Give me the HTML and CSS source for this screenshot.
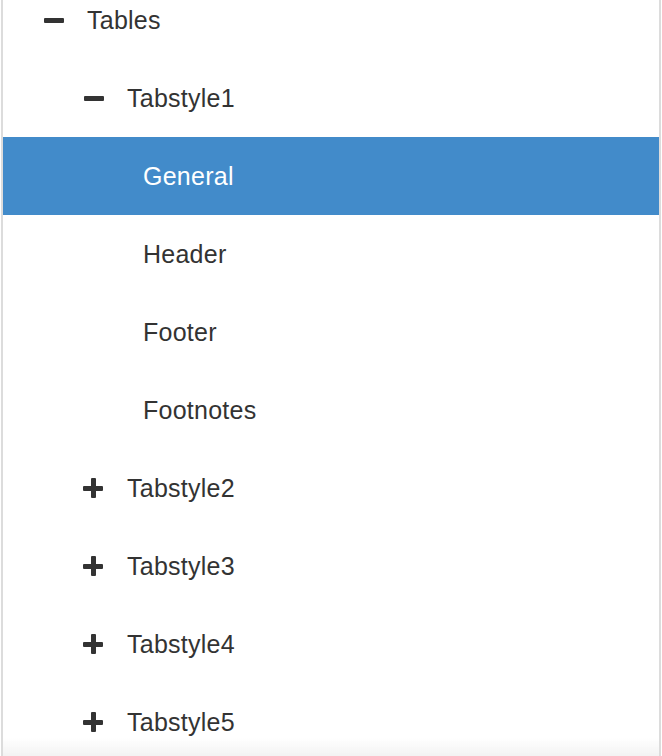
FILE: index.html
```html
<!DOCTYPE html>
<html>
<head>
<meta charset="utf-8">
<link rel="stylesheet" href="styles.css">
</head>
<body>
<div class="tree">
  <ul class="list">
    <li class="node lvl0"><span class="icon minus"></span><span class="label">Tables</span></li>
    <li class="node lvl1"><span class="icon minus"></span><span class="label">Tabstyle1</span></li>
    <li class="node lvl2 selected"><span class="label">General</span></li>
    <li class="node lvl2"><span class="label">Header</span></li>
    <li class="node lvl2"><span class="label">Footer</span></li>
    <li class="node lvl2"><span class="label">Footnotes</span></li>
    <li class="node lvl1"><span class="icon plus"></span><span class="label">Tabstyle2</span></li>
    <li class="node lvl1"><span class="icon plus"></span><span class="label">Tabstyle3</span></li>
    <li class="node lvl1"><span class="icon plus"></span><span class="label">Tabstyle4</span></li>
    <li class="node lvl1"><span class="icon plus"></span><span class="label">Tabstyle5</span></li>
  </ul>
  <div class="fade"></div>
</div>
</body>
</html>
```
FILE: styles.css
```css
html, body {
  margin: 0;
  padding: 0;
  background: #fff;
  overflow: hidden;
  height: 756px;
}
.tree {
  margin-left: 1px;
  width: 656px;
  height: 756px;
  border-left: 2px solid #dcdcdc;
  border-right: 2px solid #dcdcdc;
  overflow: hidden;
  font-family: "Liberation Sans", Arial, sans-serif;
  font-size: 25px;
  letter-spacing: 0.25px;
  color: #333;
}
.list {
  list-style: none;
  margin: -19px 0 0 0;
  padding: 0;
}
.node {
  height: 78px;
  display: flex;
  align-items: center;
}
.lvl0 { padding-left: 40px; }
.lvl1 { padding-left: 80px; }
.lvl2 { padding-left: 140px; }
.selected {
  background: #428bca;
  color: #fff;
}
.icon {
  width: 20px;
  height: 20px;
  margin-right: 24px;
  position: relative;
  flex: none;
}
.minus::before,
.plus::before,
.plus::after {
  content: "";
  position: absolute;
  background: #333;
  border-radius: 1px;
}
.minus::before {
  left: 1px;
  top: 8px;
  width: 20px;
  height: 5px;
}
.plus::before {
  left: 0;
  top: 8px;
  width: 20px;
  height: 5px;
}
.plus::after {
  left: 7.5px;
  top: 0;
  width: 5px;
  height: 20px;
}
.fade {
  position: fixed;
  left: 3px;
  right: 3px;
  bottom: 0;
  height: 18px;
  background: linear-gradient(to bottom, rgba(245,245,245,0), #f3f3f3);
}
```
